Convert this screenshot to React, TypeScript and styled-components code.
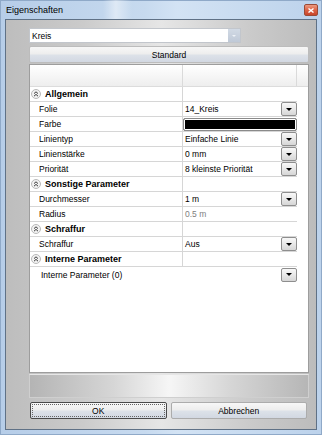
import React from 'react';
import styled, { createGlobalStyle } from 'styled-components';

const GlobalStyle = createGlobalStyle`
  html, body {
    margin: 0;
    padding: 0;
  }
  body {
    font-family: "Liberation Sans", Arial, sans-serif;
    background: #fff;
  }
`;

const Window = styled.div`
  width: 322px;
  height: 435px;
  box-sizing: border-box;
  display: flex;
  flex-direction: column;
  padding: 0 5px 5px;
  background: linear-gradient(90deg, #b6cde8 0%, #c7daef 45%, #d3e3f4 55%, #bcd2eb 100%);
  box-shadow: inset 0 0 0 1px #8fa9c8;
`;

const TitleBar = styled.div`
  height: 19px;
  margin: 0 -5px;
  padding: 0 4px 0 6px;
  display: flex;
  align-items: center;
  justify-content: space-between;
  font-size: 9px;
  color: #000;
  background: linear-gradient(
    90deg,
    rgba(255, 255, 255, 0) 0%,
    rgba(255, 255, 255, 0) 32%,
    rgba(255, 255, 255, 0.45) 36%,
    rgba(255, 255, 255, 0) 41%,
    rgba(255, 255, 255, 0) 100%
  );
`;

const CloseButton = styled.div`
  width: 14px;
  height: 12px;
  box-sizing: border-box;
  margin-top: 1px;
  border: 1px solid #9b4a36;
  border-radius: 2px;
  background: linear-gradient(#ec9a80 0%, #dc6446 50%, #c8452b 100%);
  display: flex;
  align-items: center;
  justify-content: center;
`;

const Content = styled.div`
  flex: 1;
  display: flex;
  flex-direction: column;
  border: 1px solid #5f7186;
  padding: 8px 7px 10px 23px;
  background: linear-gradient(90deg, #bdbdbd 0%, #cbcbcb 25%, #e6e6e6 50%, #cbcbcb 78%, #bcbcbc 100%);
`;

const TypeCombo = styled.div`
  width: 212px;
  height: 15px;
  box-sizing: border-box;
  border: 1px solid #c2c6cc;
  background: #fff;
  display: flex;
  align-items: stretch;
  font-size: 8.5px;
`;

const TypeText = styled.div`
  flex: 1;
  padding-left: 2px;
  display: flex;
  align-items: center;
`;

const TypeArrow = styled.div`
  width: 12px;
  background: linear-gradient(#d2dae5, #bfc9d7);
  display: flex;
  align-items: center;
  justify-content: center;
  &::after {
    content: '';
    border-left: 2px solid transparent;
    border-right: 2px solid transparent;
    border-top: 2px solid #eef2f7;
  }
`;

const PushButton = styled.div<{ $focused?: boolean }>`
  height: 17px;
  box-sizing: border-box;
  border: 1px solid ${(p) => (p.$focused ? '#4a4a4a' : '#acacac')};
  border-radius: 2px;
  background: linear-gradient(#f7f7f7 0%, #ededed 48%, #dde2e9 52%, #d2d8e2 100%);
  display: flex;
  align-items: center;
  justify-content: center;
  font-size: 8.5px;
  color: #000;
  position: relative;
  ${(p) =>
    p.$focused &&
    `&::before {
      content: '';
      position: absolute;
      inset: 1px;
      border: 1px dotted #666;
    }`}
`;

const StandardButton = styled(PushButton)`
  margin-top: 3px;
  border-color: #bcbcbc;
`;

const Grid = styled.div`
  flex: 1;
  margin-top: 1px;
  border: 1px solid #9d9d9d;
  background: #fff;
  display: flex;
  flex-direction: column;
`;

const GridHeader = styled.div`
  height: 22px;
  box-sizing: border-box;
  display: flex;
  border-bottom: 1px solid #dcdcdc;
  background: linear-gradient(#ffffff, #eeeeee);
`;

const HeaderCell = styled.div<{ $w: number }>`
  width: ${(p) => p.$w}px;
  box-sizing: border-box;
  border-right: 1px solid #dadada;
  &:last-child {
    border-right: none;
    flex: 1;
  }
`;

const GridBody = styled.div`
  width: 267px;
  display: flex;
  flex-direction: column;
`;

const Row = styled.div<{ $last?: boolean }>`
  height: 15px;
  box-sizing: border-box;
  display: flex;
  border-bottom: ${(p) => (p.$last ? 'none' : '1px solid #d6d6d6')};
  font-size: 8.5px;
`;

const LabelCell = styled.div<{ $section?: boolean }>`
  width: 153px;
  box-sizing: border-box;
  border-right: 1px solid #d6d6d6;
  display: flex;
  align-items: center;
  padding-left: ${(p) => (p.$section ? '1px' : '9px')};
  gap: 4px;
  font-weight: ${(p) => (p.$section ? 700 : 400)};
  font-size: ${(p) => (p.$section ? '9px' : '8.5px')};
  white-space: nowrap;
`;

const ValueCell = styled.div<{ $muted?: boolean; $bare?: boolean }>`
  flex: 1;
  display: flex;
  align-items: center;
  justify-content: space-between;
  padding-left: ${(p) => (p.$bare ? '0' : '2px')};
  color: ${(p) => (p.$muted ? '#808080' : '#000')};
  white-space: nowrap;
`;

const WideCell = styled.div`
  flex: 1;
  display: flex;
  align-items: center;
  justify-content: space-between;
  padding-left: 11px;
`;

const DropButton = styled.div`
  width: 16px;
  height: 14px;
  box-sizing: border-box;
  border: 1px solid #8e8e8e;
  border-radius: 2px;
  background: linear-gradient(#f8f8f8 0%, #e8e8e8 50%, #d6d6d6 100%);
  display: flex;
  align-items: center;
  justify-content: center;
  &::after {
    content: '';
    border-left: 3px solid transparent;
    border-right: 3px solid transparent;
    border-top: 3px solid #000;
  }
`;

const Swatch = styled.div<{ $color: string }>`
  flex: 1;
  height: 13px;
  box-sizing: border-box;
  border: 1px solid #8a8a8a;
  border-radius: 2px;
  background: ${(p) => p.$color};
  box-shadow: inset 0 0 0 1px #fff;
`;

const StatusBar = styled.div`
  height: 24px;
  margin-top: 1px;
  box-sizing: border-box;
  border: 1px solid #cfcfcf;
  border-top-color: #e6e6e6;
  background: linear-gradient(90deg, #b4b4b4 0%, #d6d6d6 30%, #f6f6f6 50%, #d6d6d6 72%, #b6b6b6 100%);
`;

const ButtonRow = styled.div`
  margin-top: 4px;
  display: grid;
  grid-template-columns: 1fr 1fr;
  gap: 4px;
  padding: 0 2px 0 1px;
`;

const SectionIcon = () => (
  <svg width="10" height="10" viewBox="0 0 10 10">
    <circle cx="5" cy="5" r="4.5" fill="#f2f2f2" stroke="#b9b9b9" />
    <path d="M3 4.6 L5 2.8 L7 4.6 M3 7.2 L5 5.4 L7 7.2" fill="none" stroke="#3a3a3a" strokeWidth="1" />
  </svg>
);

type Item =
  | { kind: 'section'; label: string }
  | { kind: 'prop'; label: string; value?: string; combo?: boolean; color?: string; muted?: boolean };

const items: Item[] = [
  { kind: 'section', label: 'Allgemein' },
  { kind: 'prop', label: 'Folie', value: '14_Kreis', combo: true },
  { kind: 'prop', label: 'Farbe', color: '#000' },
  { kind: 'prop', label: 'Linientyp', value: 'Einfache Linie', combo: true },
  { kind: 'prop', label: 'Linienstärke', value: '0 mm', combo: true },
  { kind: 'prop', label: 'Priorität', value: '8 kleinste Priorität', combo: true },
  { kind: 'section', label: 'Sonstige Parameter' },
  { kind: 'prop', label: 'Durchmesser', value: '1 m', combo: true },
  { kind: 'prop', label: 'Radius', value: '0.5 m', muted: true },
  { kind: 'section', label: 'Schraffur' },
  { kind: 'prop', label: 'Schraffur', value: 'Aus', combo: true },
  { kind: 'section', label: 'Interne Parameter' },
];

const App = () => {
  return (
    <>
      <GlobalStyle />
      <Window>
        <TitleBar>
          <span>Eigenschaften</span>
          <CloseButton>
            <svg width="6" height="5" viewBox="0 0 6 5">
              <path d="M0.5 0.5 L5.5 4.5 M5.5 0.5 L0.5 4.5" stroke="#fff" strokeWidth="1.4" />
            </svg>
          </CloseButton>
        </TitleBar>
        <Content>
          <TypeCombo>
            <TypeText>Kreis</TypeText>
            <TypeArrow />
          </TypeCombo>
          <StandardButton>Standard</StandardButton>
          <Grid>
            <GridHeader>
              <HeaderCell $w={153} />
              <HeaderCell $w={114} />
              <HeaderCell $w={11} />
            </GridHeader>
            <GridBody>
              {items.map((it, i) =>
                it.kind === 'section' ? (
                  <Row key={i}>
                    <LabelCell $section>
                      <SectionIcon />
                      {it.label}
                    </LabelCell>
                    <ValueCell />
                  </Row>
                ) : (
                  <Row key={i}>
                    <LabelCell>{it.label}</LabelCell>
                    <ValueCell $muted={it.muted} $bare={!!it.color}>
                      {it.color ? <Swatch $color={it.color} /> : <span>{it.value}</span>}
                      {it.combo && <DropButton />}
                    </ValueCell>
                  </Row>
                )
              )}
              <Row $last>
                <WideCell>
                  <span>Interne Parameter (0)</span>
                  <DropButton />
                </WideCell>
              </Row>
            </GridBody>
          </Grid>
          <StatusBar />
          <ButtonRow>
            <PushButton $focused>OK</PushButton>
            <PushButton>Abbrechen</PushButton>
          </ButtonRow>
        </Content>
      </Window>
    </>
  );
};

export default App;
